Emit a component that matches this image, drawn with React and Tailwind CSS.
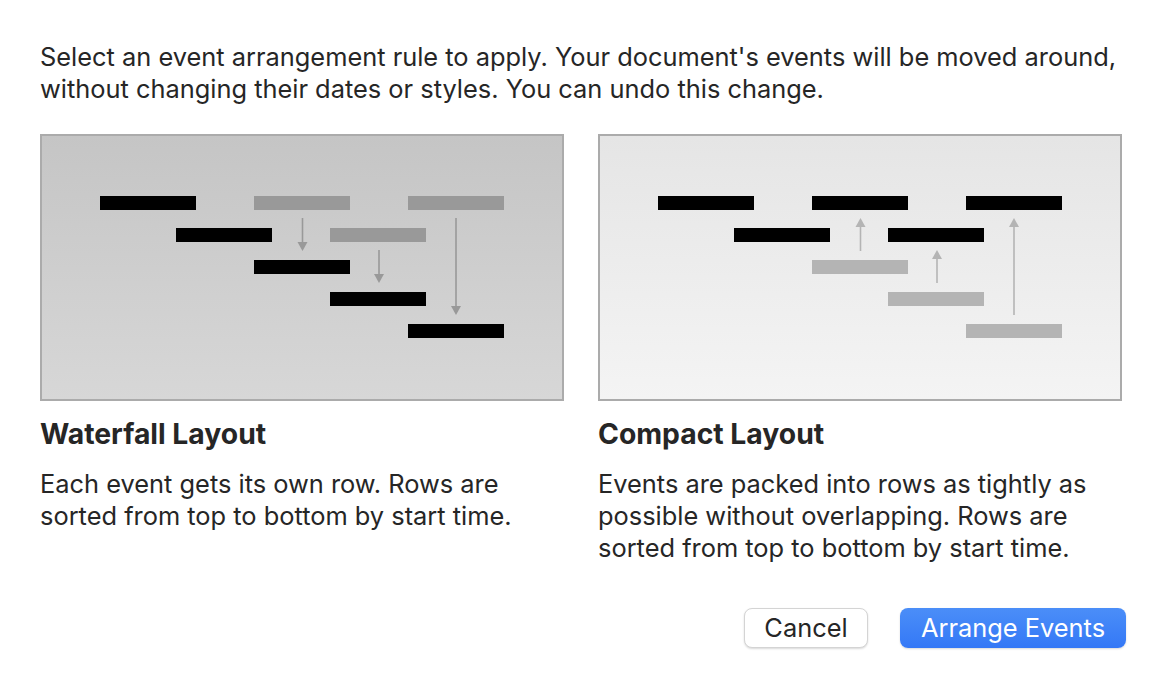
function Bar({ x, y, color }) {
    return <rect x={x} y={y} width="96" height="14" fill={color} />;
}

function Arrow({ x, from, to, color }) {
    // from = tail, to = tip
    const dir = to > from ? 1 : -1;
    const base = to - dir * 9;
    return (
        <g>
            <line x1={x} y1={from} x2={x} y2={base} stroke={color} strokeWidth="1.6" />
            <polygon points={`${x - 5},${base} ${x + 5},${base} ${x},${to}`} fill={color} />
        </g>
    );
}

function WaterfallDiagram() {
    const g = "#999999";
    return (
        <svg width="520" height="263" viewBox="0 0 520 263" className="block">
            <Bar x={58} y={60} color="#000" />
            <Bar x={212} y={60} color={g} />
            <Bar x={366} y={60} color={g} />
            <Bar x={134} y={92} color="#000" />
            <Bar x={288} y={92} color={g} />
            <Bar x={212} y={124} color="#000" />
            <Bar x={288} y={156} color="#000" />
            <Bar x={366} y={188} color="#000" />
            <Arrow x={260.5} from={82} to={115} color={g} />
            <Arrow x={337} from={114} to={147} color={g} />
            <Arrow x={414} from={82} to={179} color={g} />
        </svg>
    );
}

function CompactDiagram() {
    const g = "#b4b4b4";
    return (
        <svg width="520" height="263" viewBox="0 0 520 263" className="block">
            <Bar x={58} y={60} color="#000" />
            <Bar x={212} y={60} color="#000" />
            <Bar x={366} y={60} color="#000" />
            <Bar x={134} y={92} color="#000" />
            <Bar x={288} y={92} color="#000" />
            <Bar x={212} y={124} color={g} />
            <Bar x={288} y={156} color={g} />
            <Bar x={366} y={188} color={g} />
            <Arrow x={260.5} from={115} to={82} color={g} />
            <Arrow x={337} from={147} to={114} color={g} />
            <Arrow x={414} from={179} to={82} color={g} />
        </svg>
    );
}

function Option({ title, text, children, bg }) {
    return (
        <div>
            <div className={`w-[524px] h-[267px] border-2 border-[#ababab] ${bg}`}>
                {children}
            </div>
            <h2 className="mt-[18px] text-[28.3px] leading-[30px] font-bold text-[#262626]">
                {title}
            </h2>
            <p className="mt-[19px] text-[25.4px] leading-[32px] text-[#262626] whitespace-nowrap">
                {text}
            </p>
        </div>
    );
}

export default function App() {
    return (
        <div
            className="w-[1166px] h-[688px] bg-white px-10 pt-[41px]"
            style={{ fontFamily: "Inter, 'Noto Sans', sans-serif" }}
        >
            {/* Intro */}
            <p className="text-[25.4px] leading-[32px] text-[#262626] whitespace-nowrap">
                Select an event arrangement rule to apply. Your document's events will be moved around,
                <br />
                without changing their dates or styles. You can undo this change.
            </p>

            {/* Options */}
            <div className="mt-[29px] grid grid-cols-[524px_524px] gap-[34px]">
                <Option
                    title="Waterfall Layout"
                    bg="bg-gradient-to-b from-[#c5c5c5] to-[#d7d7d7]"
                    text={<>Each event gets its own row. Rows are<br />sorted from top to bottom by start time.</>}
                >
                    <WaterfallDiagram />
                </Option>
                <Option
                    title="Compact Layout"
                    bg="bg-gradient-to-b from-[#e5e5e5] to-[#f4f4f4]"
                    text={<>Events are packed into rows as tightly as<br />possible without overlapping. Rows are<br />sorted from top to bottom by start time.</>}
                >
                    <CompactDiagram />
                </Option>
            </div>

            {/* Buttons */}
            <div className="mt-[44px] flex justify-end gap-8">
                <button className="w-[124px] h-10 rounded-lg bg-white border border-[#d4d4d4] shadow-[0_1px_2px_rgba(0,0,0,0.15)] text-[25.4px] text-[#262626]">
                    Cancel
                </button>
                <button className="w-[226px] h-10 rounded-lg bg-gradient-to-b from-[#4b8ef8] to-[#3478f6] text-[25.4px] text-white shadow-[0_1px_2px_rgba(0,0,0,0.15)]">
                    Arrange Events
                </button>
            </div>
        </div>
    );
}
